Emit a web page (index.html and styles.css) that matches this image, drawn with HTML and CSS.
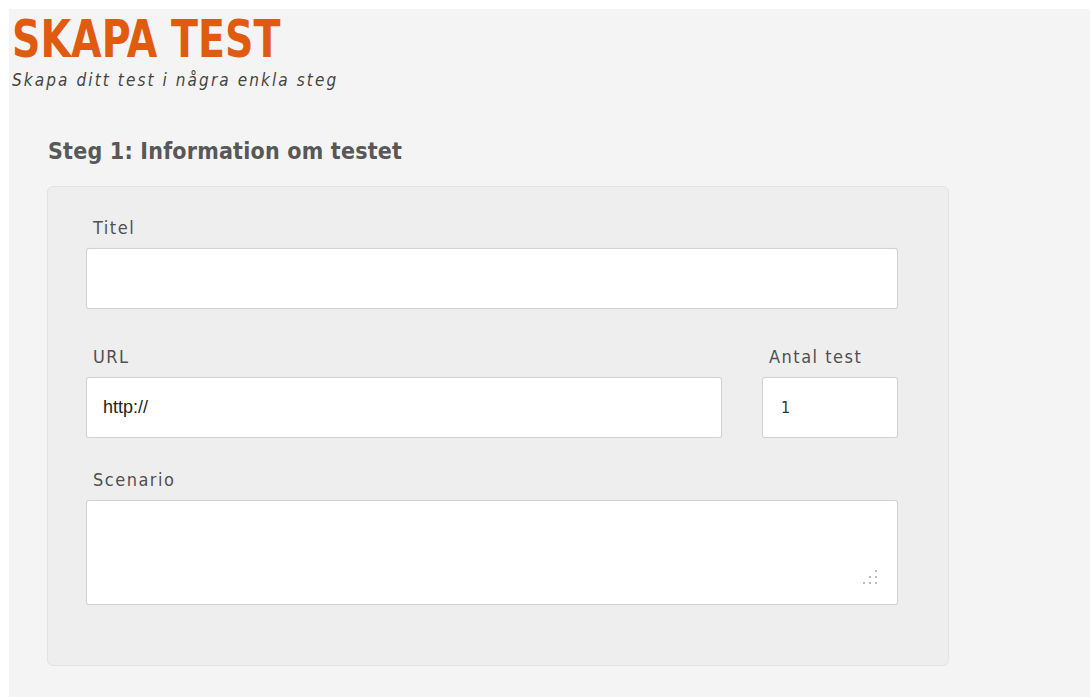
FILE: index.html
```html
<!DOCTYPE html>
<html lang="sv">
<head>
<meta charset="utf-8">
<title>Skapa test</title>
<link rel="stylesheet" href="styles.css">
</head>
<body>
<div class="page">
  <header class="page-header">
    <h1 class="page-title">SKAPA TEST</h1>
    <p class="page-subtitle">Skapa ditt test i några enkla steg</p>
  </header>

  <section class="step">
    <h2 class="step-title">Steg 1: Information om testet</h2>
    <form class="panel">
      <div class="field">
        <label class="field-label" for="titel">Titel</label>
        <input class="field-input" id="titel" type="text">
      </div>

      <div class="field-row">
        <div class="field">
          <label class="field-label" for="url">URL</label>
          <input class="field-input field-input-url" id="url" type="text" value="http://">
        </div>
        <div class="field">
          <label class="field-label" for="antal">Antal test</label>
          <input class="field-input field-input-count" id="antal" type="text" value="1">
        </div>
      </div>

      <div class="field field-scenario">
        <label class="field-label" for="scenario">Scenario</label>
        <div class="textarea-wrap">
          <textarea class="field-input field-textarea" id="scenario"></textarea>
          <svg class="grip" width="16" height="16" viewBox="0 0 16 16" aria-hidden="true">
            <rect x="13" y="1" width="2" height="2"/>
            <rect x="7" y="7" width="2" height="2"/>
            <rect x="13" y="7" width="2" height="2"/>
            <rect x="1" y="13" width="2" height="2"/>
            <rect x="7" y="13" width="2" height="2"/>
            <rect x="13" y="13" width="2" height="2"/>
          </svg>
        </div>
      </div>
    </form>
  </section>
</div>
</body>
</html>
```

FILE: styles.css
```css
html, body {
  margin: 0;
  padding: 0;
  background: #ffffff;
}

body {
  font-family: "DejaVu Sans Condensed", "Liberation Sans", sans-serif;
}

.page {
  margin: 9px 0 0 9px;
  min-height: 688px;
  background: #f4f4f4;
  padding: 0 0 30px 0;
  box-sizing: border-box;
}

.page-header {
  padding: 8px 0 0 3px;
}

/* condensed display heading */
.page-title {
  display: inline-block;
  margin: 0;
  font-size: 52px;
  line-height: 44px;
  font-weight: 700;
  color: #e05b10;
  transform: scaleX(0.845);
  transform-origin: 0 50%;
  white-space: nowrap;
}

.page-subtitle {
  margin: 9px 0 0 0;
  font-size: 17px;
  line-height: 20px;
  font-style: italic;
  color: #444444;
  letter-spacing: 2.1px;
}

.step {
  padding: 0 0 0 38px;
}

.step-title {
  margin: 47px 0 0 1px;
  font-size: 23px;
  line-height: 28px;
  font-weight: 700;
  color: #585858;
  letter-spacing: 0.2px;
}

.panel {
  margin-top: 21px;
  width: 902px;
  height: 480px;
  box-sizing: border-box;
  background: #eeeeee;
  border: 1px solid #e3e3e3;
  border-radius: 6px;
  padding: 30px 0 0 38px;
  display: flex;
  flex-direction: column;
}

.field {
  display: flex;
  flex-direction: column;
}

.field-label {
  font-size: 18px;
  line-height: 22px;
  color: #505050;
  padding-left: 7px;
  margin-bottom: 9px;
  letter-spacing: 1.5px;
}

.field-input {
  box-sizing: border-box;
  width: 812px;
  height: 61px;
  margin: 0;
  background: #ffffff;
  border: 1px solid #d2d2d2;
  border-radius: 3px;
  box-shadow: 0 0 1px rgba(0, 0, 0, 0.08);
  padding: 0 16px;
  font-family: "Liberation Sans", Arial, sans-serif;
  font-size: 18px;
  color: #222222;
  outline: none;
}

.field-row {
  margin-top: 37px;
  display: grid;
  grid-template-columns: 636px 136px;
  column-gap: 40px;
}

.field-input-url {
  width: 636px;
}

.field-input-count {
  width: 136px;
  padding-left: 18px;
  font-family: "DejaVu Sans Condensed", sans-serif;
  font-size: 16px;
  color: #333333;
}

.field-scenario {
  margin-top: 31px;
}

.textarea-wrap {
  position: relative;
  width: 812px;
  height: 105px;
}

.field-textarea {
  display: block;
  height: 105px;
  resize: none;
  padding: 12px 16px;
}

.grip {
  position: absolute;
  right: 20px;
  bottom: 20px;
  fill: #bcbcbc;
}
```
